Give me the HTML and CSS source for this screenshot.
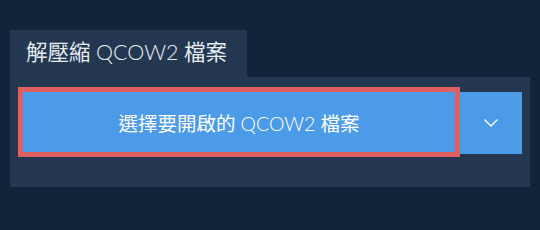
FILE: index.html
```html
<!DOCTYPE html>
<html lang="zh-Hant">
<head>
  <meta charset="UTF-8" />
  <title>解壓縮 QCOW2 檔案</title>
  <link rel="stylesheet" href="styles.css">
</head>
<body>
  <div class="widget">
    <!-- Tab header -->
    <div class="tab">解壓縮 <span class="latin">QCOW2</span> 檔案</div>

    <!-- Panel with file picker -->
    <div class="panel">
      <div class="picker">
        <button class="pick-btn">選擇要開啟的 <span class="latin">QCOW2</span> 檔案</button>
        <button class="drop-btn" aria-label="更多選項">
          <svg class="chevron" viewBox="0 0 14 8">
            <path d="M0.5 0.5 L7 7 L13.5 0.5" />
          </svg>
        </button>
      </div>
    </div>
  </div>
</body>
</html>
```

FILE: styles.css
```css
/* Basic resets & layout */
html, body {
  margin: 0;
  padding: 0;
  width: 100%;
  height: 100%;
  background-color: #10243a;
  font-family: Lato, "Noto Sans CJK TC", sans-serif;
  color: #fff;
}

.widget {
  padding: 30px 10px 0 10px;
}

/* Latin part of the labels is a lighter cut */
.latin {
  font-weight: 300;
}

/* Tab header */
.tab {
  display: inline-block;
  box-sizing: border-box;
  width: 237px;
  height: 47px;
  padding: 0 0 0 16px;
  line-height: 44px;
  background: #233850;
  color: #e6ebf1;
  font-size: 21.5px;
}

/* Panel */
.panel {
  background: #233850;
  height: 110px;
  box-sizing: border-box;
  padding: 10px 8px;
}
.picker {
  display: flex;
  align-items: flex-start;
}

.pick-btn {
  width: 442px;
  height: 70px;
  box-sizing: border-box;
  border: 5px solid #e06060;
  background: #4c9be8;
  color: #fff;
  font-family: Lato, "Noto Sans CJK TC", sans-serif;
  font-size: 19.5px;
  padding: 0;
  cursor: pointer;
}

.drop-btn {
  width: 62px;
  height: 62px;
  margin-top: 5px;
  border: none;
  background: #4c9be8;
  display: flex;
  align-items: center;
  justify-content: center;
  padding: 0;
  cursor: pointer;
}
.chevron {
  width: 14px;
  height: 8px;
  overflow: visible;
}
.chevron path {
  fill: none;
  stroke: #fff;
  stroke-width: 1.4;
}
```
